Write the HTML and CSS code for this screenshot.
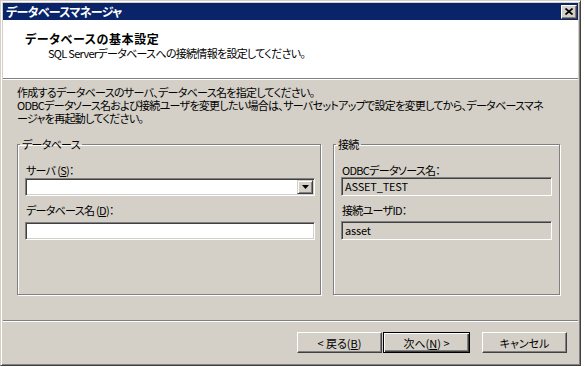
FILE: index.html
```html
<html>

<head>
    <title>データベースマネージャ</title>
    <meta charset="utf-8">
    <link rel="stylesheet" href="styles.css">
</head>

<body>
    <div class="window">
        <div class="titleBar">
            <span class="titleText">データベースマネージャ</span>
            <span class="closeButton">
                <svg width="8" height="7" viewBox="0 0 8 7">
                    <path d="M0.5 0.5 L7.5 6.5 M7.5 0.5 L0.5 6.5" stroke="#000" stroke-width="1.7" fill="none" />
                </svg>
            </span>
        </div>

        <div class="wizardHeader">
            <div class="headerTitle">データベースの基本設定</div>
            <div class="headerSub">SQL Serverデータベースへの接続情報を設定してください。</div>
        </div>

        <div class="wizardBody">
            <div class="introText">
                作成するデータベースのサーバ、データベース名を指定してください。<br>
                ODBCデータソース名および接続ユーザを変更したい場合は、サーバセットアップで設定を変更してから、データベースマネ<br>
                ージャを再起動してください。
            </div>

            <div class="groupRow">
                <fieldset class="groupBox groupDatabase">
                    <legend>データベース</legend>
                    <div class="fieldLabel firstLabel">サーバ (<u>S</u>)：</div>
                    <div class="comboBox">
                        <span class="comboButton">
                            <svg width="7" height="4" viewBox="0 0 7 4">
                                <polygon points="0,0 7,0 3.5,4" fill="#000" />
                            </svg>
                        </span>
                    </div>
                    <div class="fieldLabel">データベース名 (<u>D</u>)：</div>
                    <div class="textBox"></div>
                </fieldset>

                <fieldset class="groupBox groupConnect">
                    <legend>接続</legend>
                    <div class="fieldLabel firstLabel">ODBCデータソース名：</div>
                    <div class="textBox readOnly">ASSET_TEST</div>
                    <div class="fieldLabel">接続ユーザID：</div>
                    <div class="textBox readOnly">asset</div>
                </fieldset>
            </div>
        </div>

        <div class="wizardFooter">
            <button class="dlgButton backButton">&lt; 戻る(<u>B</u>)</button>
            <button class="dlgButton defaultButton">次へ(<u>N</u>) &gt;</button>
            <button class="dlgButton">キャンセル</button>
        </div>
    </div>
</body>

</html>
```

FILE: styles.css
```css
body {
    margin: 0px;
    background-color: #ffffff;
    font-family: "Noto Sans CJK JP", sans-serif;
    font-size: 11px;
    font-feature-settings: "palt";
    letter-spacing: -0.7px;
    color: #000000;
}

.window {
    width: 581px;
    height: 366px;
    box-sizing: border-box;
    padding: 2px;
    display: flex;
    flex-direction: column;
    background-color: #d4d0c8;
    border: 1px solid;
    border-color: #d4d0c8 #404040 #404040 #d4d0c8;
    box-shadow: inset 1px 1px 0 #ffffff, inset -1px -1px 0 #808080;
}

/* title bar */
.titleBar {
    height: 17px;
    display: flex;
    align-items: center;
    justify-content: space-between;
    padding: 0 1px 0 3px;
    background-color: #0a246a;
}

.titleText {
    color: #ffffff;
    font-weight: bold;
    font-size: 12px;
    line-height: 17px;
}

.closeButton {
    width: 16px;
    height: 14px;
    box-sizing: border-box;
    display: flex;
    align-items: center;
    justify-content: center;
    background-color: #d4d0c8;
    border: 1px solid;
    border-color: #ffffff #404040 #404040 #ffffff;
    box-shadow: inset -1px -1px 0 #808080;
}

/* white header */
.wizardHeader {
    height: 59px;
    box-sizing: border-box;
    padding: 12px 0 0 22px;
    background-color: #ffffff;
    border-bottom: 1px solid #808080;
    box-shadow: 0 1px 0 #ffffff;
}

.headerTitle {
    font-weight: bold;
    font-size: 12px;
    line-height: 14px;
    letter-spacing: 0.6px;
}

.headerSub {
    margin-left: 23px;
    line-height: 14px;
}

/* body */
.wizardBody {
    flex: 1;
    padding: 7px 0 0 14px;
}

.introText {
    line-height: 13px;
    white-space: nowrap;
}

.groupRow {
    display: flex;
    gap: 12px;
    height: 157px;
    margin-top: 13px;
}

.groupBox {
    margin: 0px;
    padding: 0 5px 0 7px;
    box-sizing: border-box;
    min-width: 0;
    border: 1px solid #808080;
    box-shadow: inset 1px 1px 0 #ffffff, 1px 1px 0 #ffffff;
}

.groupBox legend {
    padding: 0 2px;
    margin-left: -5px;
    line-height: 13px;
}

.groupDatabase {
    width: 304px;
}

.groupConnect {
    width: 227px;
    padding-right: 7px;
}

.fieldLabel {
    padding-left: 1px;
    margin-top: 8px;
    line-height: 13px;
}

.firstLabel {
    margin-top: 13px;
}

.textBox {
    height: 18px;
    box-sizing: border-box;
    margin-top: 5px;
    padding: 2px 3px;
    line-height: 13px;
    background-color: #ffffff;
    border: 1px solid;
    border-color: #808080 #ffffff #ffffff #808080;
    box-shadow: inset 1px 1px 0 #404040, inset -1px -1px 0 #d4d0c8;
}

.readOnly {
    height: 19px;
    letter-spacing: -0.2px;
    background-color: #d4d0c8;
}

.groupConnect .textBox {
    margin-top: 0px;
}

.groupConnect .textBox + .fieldLabel + .textBox {
    margin-top: 4px;
}

.comboBox {
    height: 18px;
    box-sizing: border-box;
    margin-top: 1px;
    padding: 1px;
    display: flex;
    justify-content: flex-end;
    background-color: #ffffff;
    border: 1px solid;
    border-color: #808080 #ffffff #ffffff #808080;
    box-shadow: inset 1px 1px 0 #404040, inset -1px -1px 0 #d4d0c8;
}

.comboButton {
    width: 16px;
    box-sizing: border-box;
    display: flex;
    align-items: center;
    justify-content: center;
    background-color: #d4d0c8;
    border: 1px solid;
    border-color: #d4d0c8 #404040 #404040 #d4d0c8;
    box-shadow: inset 1px 1px 0 #ffffff, inset -1px -1px 0 #808080;
}

/* footer buttons */
.wizardFooter {
    height: 43px;
    box-sizing: border-box;
    display: flex;
    justify-content: flex-end;
    align-items: flex-start;
    padding: 11px 11px 0 0;
    border-top: 1px solid #808080;
    box-shadow: inset 0 1px 0 #ffffff;
}

.dlgButton {
    width: 85px;
    height: 21px;
    padding: 0px;
    font-family: inherit;
    font-size: 11px;
    font-feature-settings: "palt";
    color: #000000;
    background-color: #d4d0c8;
    border: 1px solid;
    border-color: #ffffff #404040 #404040 #ffffff;
    box-shadow: inset -1px -1px 0 #808080;
}

.backButton {
    margin-right: 1px;
}

.defaultButton {
    width: 87px;
    margin-right: 12px;
    border-color: #000000;
    box-shadow: inset 1px 1px 0 #ffffff, inset -1px -1px 0 #404040, inset -2px -2px 0 #808080;
}
```
